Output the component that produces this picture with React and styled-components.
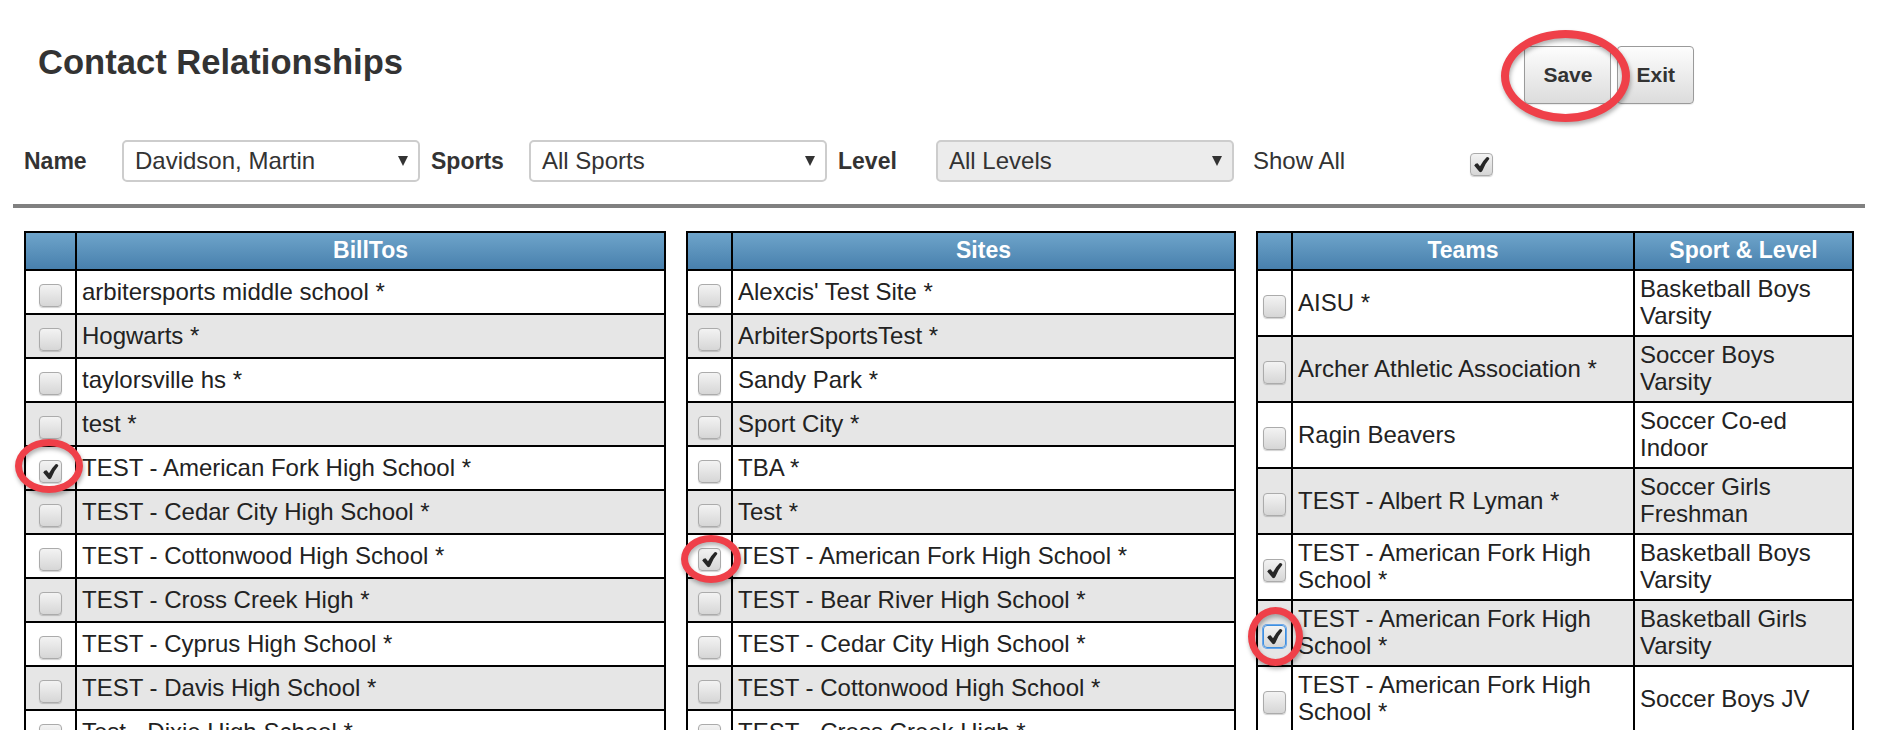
import React from 'react';
import styled, { createGlobalStyle } from 'styled-components';

const GlobalStyle = createGlobalStyle`
  html, body {
    margin: 0;
    padding: 0;
    background: #fff;
  }
  body {
    font-family: "Liberation Sans", Arial, Helvetica, sans-serif;
    color: #333;
    overflow: hidden;
  }
`;

const Page = styled.div`
  width: 1899px;
  height: 730px;
  overflow: hidden;
  position: relative;
`;

const Header = styled.header`
  display: flex;
  align-items: flex-start;
  justify-content: space-between;
  padding: 43px 205px 0 38px;
`;

const Title = styled.h1`
  margin: 0;
  font-size: 34.6px;
  font-weight: bold;
  color: #333;
  line-height: 39px;
`;

const ButtonGroup = styled.div`
  display: flex;
  gap: 6px;
  margin-top: 3px;
`;

const ActionButton = styled.button`
  position: relative;
  height: 58px;
  padding: 0 18px;
  border: 1px solid #9a9a9a;
  border-radius: 4px;
  background: linear-gradient(#fdfdfd, #dcdcdc);
  font-family: inherit;
  font-size: 21px;
  font-weight: bold;
  color: #333;
  box-shadow: 0 1px 1px rgba(0, 0, 0, 0.08);
`;

const FilterRow = styled.div`
  display: flex;
  align-items: center;
  height: 42px;
  margin: 36px 0 0 14px;
`;

const FilterLabel = styled.label`
  width: 108px;
  box-sizing: border-box;
  padding-left: 10px;
  font-size: 23px;
  font-weight: bold;
  color: #333;
`;

const SelectBox = styled.div`
  width: 298px;
  height: 42px;
  box-sizing: border-box;
  margin-right: 1px;
  padding: 0 10px 0 11px;
  display: flex;
  align-items: center;
  justify-content: space-between;
  border: 2px solid #cdcdcd;
  border-radius: 5px;
  background: ${(p) => (p.$disabled ? '#ececec' : '#fff')};
  font-size: 24px;
  color: #333;
`;

const ShowAllLabel = styled.span`
  width: 235px;
  box-sizing: border-box;
  padding-left: 18px;
  font-size: 24px;
  color: #333;
`;

const Divider = styled.hr`
  margin: 22px 0 0 13px;
  width: 1852px;
  height: 4px;
  border: 0;
  background: #808080;
`;

const TablesRow = styled.div`
  display: flex;
  align-items: flex-start;
  gap: 20px;
  margin: 23px 0 0 24px;
`;

const Table = styled.table`
  width: ${(p) => p.$w}px;
  border-collapse: collapse;
  table-layout: fixed;
  border: 2px solid #000;
  font-size: 24px;
  color: #222;
`;

const Col = styled.col`
  width: ${(p) => (p.$w ? `${p.$w}px` : 'auto')};
`;

const Th = styled.th`
  border: 2px solid #000;
  padding: 4px 5px 5px;
  line-height: 27px;
  background: linear-gradient(#6ea4ca, #4880ad);
  color: #fff;
  font-size: 23px;
  font-weight: bold;
  text-align: center;
`;

const Tr = styled.tr`
  background: ${(p) => (p.$alt ? '#e6e6e6' : '#fff')};
`;

const Td = styled.td`
  border: 2px solid #000;
  padding: ${(p) => (p.$tall ? '4px 5px 6px' : '7px 5px 8px')};
  line-height: 27px;
  vertical-align: middle;
  text-align: left;
`;

const CheckTd = styled.td`
  border: 2px solid #000;
  padding: 0;
  vertical-align: middle;
`;

const CheckHolder = styled.span`
  position: relative;
  display: block;
  width: 23px;
  height: 23px;
  margin: ${(p) => (p.$inline ? '7px 0 0' : '7px auto 0')};
`;

const Box = styled.span`
  display: flex;
  align-items: center;
  justify-content: center;
  width: 23px;
  height: 23px;
  box-sizing: border-box;
  border: 1px solid ${(p) => (p.$focus ? '#3d8fe0' : '#ababab')};
  border-radius: 4px;
  background: linear-gradient(#f3f3f3, #d6d6d6);
  box-shadow: ${(p) =>
    p.$focus ? '0 0 0 1px #6aa6e8' : '0 1px 1px rgba(0, 0, 0, 0.18)'};
`;

const Ring = styled.span`
  position: absolute;
  z-index: 5;
  left: ${(p) => p.$x}px;
  top: ${(p) => p.$y}px;
  width: ${(p) => p.$w}px;
  height: ${(p) => p.$h}px;
  box-sizing: border-box;
  border: ${(p) => p.$t || 7}px solid #ef4049;
  border-radius: 50%;
  pointer-events: none;
  filter: drop-shadow(1px 3px 2px rgba(0, 0, 0, 0.3));
`;

const Arrow = () => (
  <svg width="10" height="10" viewBox="0 0 10 10">
    <path d="M0 0 H10 L5 10 Z" fill="#333" />
  </svg>
);

const Tick = () => (
  <svg width="17" height="17" viewBox="0 0 17 17">
    <path
      d="M1.2 9.4 Q2.4 7.2 4.6 7.2 L7 10.2 Q9.8 4.8 13.6 1.2 Q15.8 0.6 16.4 2.8 Q12 7.8 9.4 14.8 Q8.4 16.8 6.4 15.8 Z"
      fill="#262626"
    />
  </svg>
);

const CheckBox = ({ checked, focus, ring, inline }) => (
  <CheckHolder $inline={inline}>
    <Box $focus={focus}>{checked && <Tick />}</Box>
    {ring && <Ring $x={ring.x} $y={ring.y} $w={ring.w} $h={ring.h} />}
  </CheckHolder>
);

const billTos = [
  { name: 'arbitersports middle school *' },
  { name: 'Hogwarts *' },
  { name: 'taylorsville hs *' },
  { name: 'test *' },
  {
    name: 'TEST - American Fork High School *',
    checked: true,
    ring: { x: -24, y: -21, w: 68, h: 54 },
  },
  { name: 'TEST - Cedar City High School *' },
  { name: 'TEST - Cottonwood High School *' },
  { name: 'TEST - Cross Creek High *' },
  { name: 'TEST - Cyprus High School *' },
  { name: 'TEST - Davis High School *' },
  { name: 'Test - Dixie High School *' },
  { name: 'TEST - Granite High School *' },
];

const sites = [
  { name: "Alexcis' Test Site *" },
  { name: 'ArbiterSportsTest *' },
  { name: 'Sandy Park *' },
  { name: 'Sport City *' },
  { name: 'TBA *' },
  { name: 'Test *' },
  {
    name: 'TEST - American Fork High School *',
    checked: true,
    ring: { x: -17, y: -13, w: 60, h: 48 },
  },
  { name: 'TEST - Bear River High School *' },
  { name: 'TEST - Cedar City High School *' },
  { name: 'TEST - Cottonwood High School *' },
  { name: 'TEST - Cross Creek High *' },
  { name: 'TEST - Cyprus High School *' },
];

const teams = [
  { name: 'AISU *', sport: 'Basketball Boys Varsity' },
  { name: 'Archer Athletic Association *', sport: 'Soccer Boys Varsity' },
  { name: 'Ragin Beavers', sport: 'Soccer Co-ed Indoor' },
  { name: 'TEST - Albert R Lyman *', sport: 'Soccer Girls Freshman' },
  {
    name: 'TEST - American Fork High School *',
    sport: 'Basketball Boys Varsity',
    checked: true,
  },
  {
    name: 'TEST - American Fork High School *',
    sport: 'Basketball Girls Varsity',
    checked: true,
    focus: true,
    ring: { x: -15, y: -18, w: 55, h: 59 },
  },
  { name: 'TEST - American Fork High School *', sport: 'Soccer Boys JV' },
  { name: 'TEST - American Fork High School *', sport: 'Soccer Girls Varsity' },
];

const SimpleTable = ({ width, checkWidth, title, rows }) => (
  <Table $w={width}>
    <colgroup>
      <Col $w={checkWidth} />
      <Col />
    </colgroup>
    <thead>
      <tr>
        <Th />
        <Th>{title}</Th>
      </tr>
    </thead>
    <tbody>
      {rows.map((r, i) => (
        <Tr key={i} $alt={i % 2 === 1}>
          <CheckTd>
            <CheckBox checked={r.checked} ring={r.ring} />
          </CheckTd>
          <Td>{r.name}</Td>
        </Tr>
      ))}
    </tbody>
  </Table>
);

export default function App() {
  return (
    <Page>
      <GlobalStyle />
      <Header>
        <Title>Contact Relationships</Title>
        <ButtonGroup>
          <ActionButton>
            Save
            <Ring $x={-24} $y={-17} $w={129} $h={92} $t={8} />
          </ActionButton>
          <ActionButton>Exit</ActionButton>
        </ButtonGroup>
      </Header>

      <FilterRow>
        <FilterLabel>Name</FilterLabel>
        <SelectBox>
          <span>Davidson, Martin</span>
          <Arrow />
        </SelectBox>
        <FilterLabel>Sports</FilterLabel>
        <SelectBox>
          <span>All Sports</span>
          <Arrow />
        </SelectBox>
        <FilterLabel>Level</FilterLabel>
        <SelectBox $disabled>
          <span>All Levels</span>
          <Arrow />
        </SelectBox>
        <ShowAllLabel>Show All</ShowAllLabel>
        <CheckBox checked inline />
      </FilterRow>

      <Divider />

      <TablesRow>
        <SimpleTable width={642} checkWidth={51} title="BillTos" rows={billTos} />
        <SimpleTable width={550} checkWidth={45} title="Sites" rows={sites} />
        <Table $w={598}>
          <colgroup>
            <Col $w={35} />
            <Col $w={342} />
            <Col />
          </colgroup>
          <thead>
            <tr>
              <Th />
              <Th>Teams</Th>
              <Th>Sport &amp; Level</Th>
            </tr>
          </thead>
          <tbody>
            {teams.map((t, i) => (
              <Tr key={i} $alt={i % 2 === 1}>
                <CheckTd>
                  <CheckBox checked={t.checked} focus={t.focus} ring={t.ring} />
                </CheckTd>
                <Td $tall>{t.name}</Td>
                <Td $tall>{t.sport}</Td>
              </Tr>
            ))}
          </tbody>
        </Table>
      </TablesRow>
    </Page>
  );
}
